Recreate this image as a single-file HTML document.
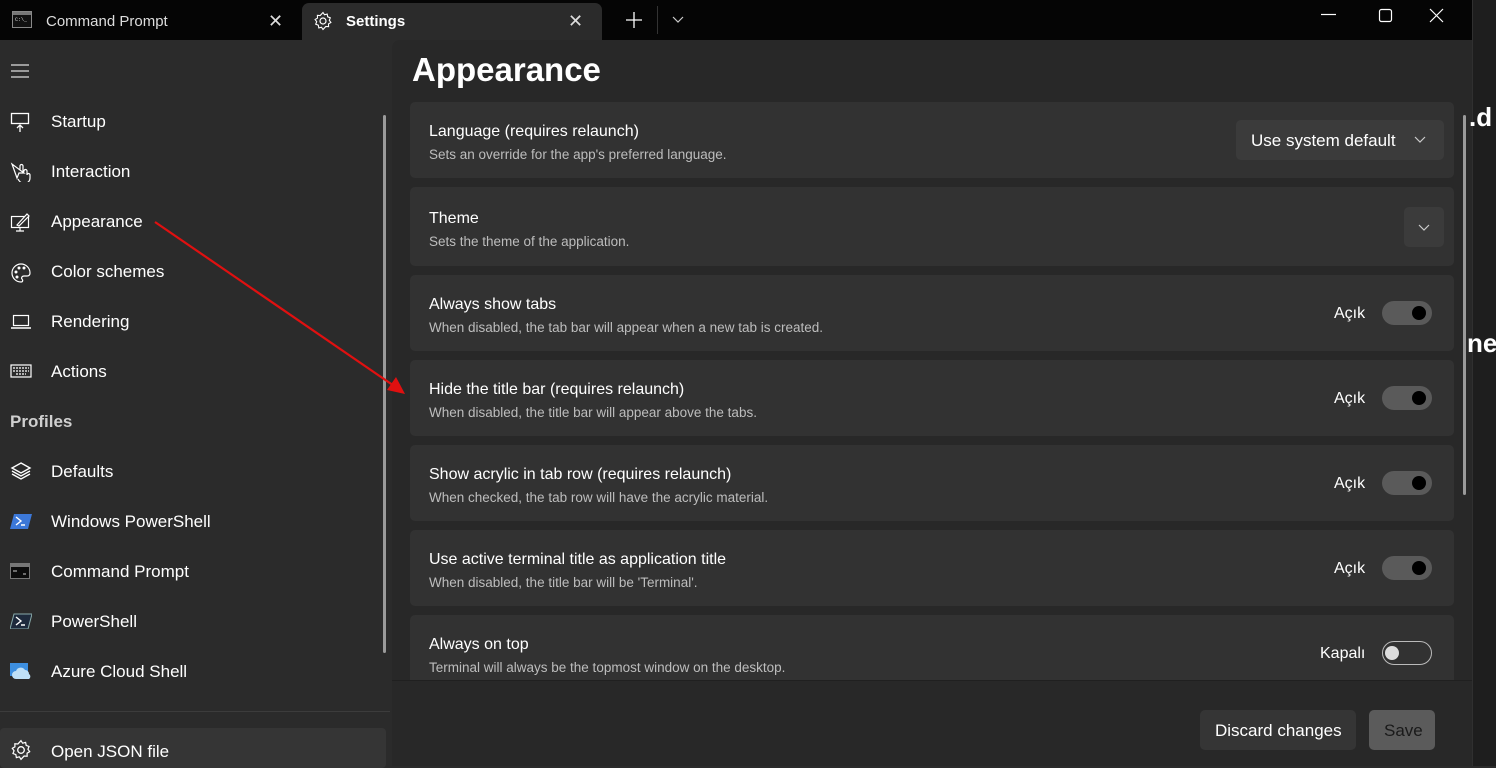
<!DOCTYPE html>
<html><head><meta charset="utf-8"><style>
*{box-sizing:border-box;margin:0;padding:0}
body{width:1496px;height:766px;overflow:hidden;background:#2b2b2b;font-family:"Liberation Sans",sans-serif;color:#fff;position:relative}
.abs{position:absolute}
.tabbar{left:0;top:0;width:1472px;height:40px;background:#050505}
.tab{top:3px;height:37px;font-size:15px;display:flex;align-items:center}
.side{left:0;top:40px;width:390px;height:726px;background:#2b2b2b}
.nav{position:absolute;left:51px;font-size:17px;color:#fff}
.ic{position:absolute;left:10px}
.main{left:392px;top:40px;width:1080px;height:726px;background:#282828;border-top-left-radius:8px}
.card{position:absolute;left:18px;width:1044px;background:#323232;border-radius:5px}
.card .t{position:absolute;left:19px;font-size:16px;color:#fff;top:21px}
.card .s{position:absolute;left:19px;font-size:13.5px;color:#bdbdbd;top:45px}
.tg{position:absolute;right:22px;width:50px;height:24px;border-radius:12px;background:#5a5a5a}
.tg.on::after{content:"";position:absolute;right:6px;top:5px;width:14px;height:14px;border-radius:50%;background:#000}
.tl{position:absolute;font-size:16px;color:#fff}
.right{left:1472px;top:0;width:24px;height:766px;background:#1e1e1e;border-left:1px solid #303030}
</style></head><body>
<div class="abs tabbar"></div>
<div class="abs tab" style="left:0;width:300px;">
 <svg class="abs" style="left:12px;top:8px" width="20" height="17"><rect x="0.5" y="0.5" width="19" height="16" fill="#111" stroke="#888"/><rect x="1" y="1" width="18" height="3" fill="#777"/><text x="3" y="10" font-size="5" fill="#ddd" font-family="Liberation Mono">C:\_</text></svg>
 <span class="abs" style="left:46px;color:#ddd">Command Prompt</span>
 <span class="abs" style="left:268px;color:#ddd;font-size:18px">✕</span>
</div>
<div class="abs tab" style="left:302px;width:300px;background:#2b2b2b;border-radius:7px 7px 0 0;">
 <svg class="abs" style="left:11px;top:8px" width="20" height="20" viewBox="0 0 20 20"><circle cx="10" cy="10" r="3" fill="none" stroke="#fff" stroke-width="1.2"/><path d="M10 1.5l1.5 2.3 2.7-.7.5 2.7 2.6 1-1 2.5 1.6 2.2-2.4 1.4.1 2.8-2.8-.2L10 18.5l-1.5-2.3-2.7.7-.5-2.7-2.6-1 1-2.5L2.1 8.5l2.4-1.4-.1-2.8 2.8.2z" fill="none" stroke="#fff" stroke-width="1.1"/></svg>
 <span class="abs" style="left:44px;font-weight:bold">Settings</span>
 <span class="abs" style="left:266px;color:#ddd;font-size:18px">✕</span>
</div>
<svg class="abs" style="left:625px;top:11px" width="18" height="18"><path d="M9 1v16M1 9h16" stroke="#fff" stroke-width="1.3"/></svg>
<div class="abs" style="left:657px;top:6px;width:1px;height:28px;background:#333"></div>
<svg class="abs" style="left:672px;top:16px" width="12" height="8"><path d="M1 1l5 5 5-5" stroke="#ccc" fill="none" stroke-width="1.2"/></svg>
<svg class="abs" style="left:1320px;top:8px" width="140" height="16"><path d="M1 6.5h15" stroke="#fff" stroke-width="1.2"/><rect x="59.5" y="1.5" width="12" height="12" rx="2" fill="none" stroke="#fff" stroke-width="1.2"/><path d="M110 1l13 13M123 1l-13 13" stroke="#fff" stroke-width="1.2"/></svg>

<div class="abs side">
 <svg class="ic" style="top:24px" width="20" height="14"><path d="M1 1h18M1 7h18M1 13h18" stroke="#ddd" stroke-width="1.2"/></svg>
 <svg class="ic" style="top:72px" width="20" height="20"><rect x="1.5" y="1.5" width="17" height="10" fill="none" stroke="#fff" stroke-width="1.3"/><path d="M10 20v-7M7 16l3-3 3 3" stroke="#fff" fill="none" stroke-width="1.3"/></svg>
 <div class="nav" style="top:72px">Startup</div>
 <svg class="ic" style="top:122px" width="22" height="20"><path d="M2 2l5 14 2-5 5 0z M10 8V4a1.5 1.5 0 013 0v7l1-2a1.5 1.5 0 013 0v2 1 1a1.5 1.5 0 013 0v3c0 3-2 5-5 5h-2c-2 0-4-2-5-4" fill="none" stroke="#fff" stroke-width="1.2"/></svg>
 <div class="nav" style="top:122px">Interaction</div>
 <svg class="ic" style="top:172px" width="22" height="20"><rect x="1.5" y="4.5" width="17" height="11" fill="none" stroke="#fff" stroke-width="1.2"/><path d="M10 19V16M6 19h8M7 13l10-11 2 2-10 10z" stroke="#fff" fill="#2b2b2b" stroke-width="1.2"/></svg>
 <div class="nav" style="top:172px">Appearance</div>
 <svg class="ic" style="top:222px" width="22" height="22"><path d="M11 2a9 9 0 100 18c2 0 2-2 1-3s0-3 2-3h3c2 0 3-1 3-3 0-5-4-9-9-9z" fill="none" stroke="#fff" stroke-width="1.2"/><circle cx="6" cy="10" r="1.5" fill="#fff"/><circle cx="9" cy="6" r="1.5" fill="#fff"/><circle cx="14" cy="6" r="1.5" fill="#fff"/><circle cx="7" cy="15" r="1.5" fill="#fff"/></svg>
 <div class="nav" style="top:222px">Color schemes</div>
 <svg class="ic" style="top:274px" width="22" height="16"><rect x="3.5" y="1.5" width="15" height="10" fill="none" stroke="#fff" stroke-width="1.2"/><path d="M1 14h20" stroke="#fff" stroke-width="1.6"/></svg>
 <div class="nav" style="top:272px">Rendering</div>
 <svg class="ic" style="top:324px" width="22" height="14"><rect x="1" y="1" width="20" height="12" fill="none" stroke="#fff" stroke-width="1.2"/><path d="M3 4h16M3 7h16M6 10h10" stroke="#fff" stroke-width="1.3" stroke-dasharray="2 1"/></svg>
 <div class="nav" style="top:322px">Actions</div>
 <div class="nav" style="left:10px;top:372px;font-weight:bold;color:#cfcfcf">Profiles</div>
 <svg class="ic" style="top:421px" width="22" height="20"><path d="M11 2l9 5-9 5-9-5z M2 10l9 5 9-5 M2 13l9 5 9-5" fill="none" stroke="#fff" stroke-width="1.4"/></svg>
 <div class="nav" style="top:422px">Defaults</div>
 <svg class="ic" style="top:473px" width="22" height="16"><path d="M4 1h18l-4 15H0z" fill="#3c78d8"/><path d="M6 4l5 4-5 4M11 12h4" stroke="#fff" stroke-width="1.4" fill="none"/></svg>
 <div class="nav" style="top:472px">Windows PowerShell</div>
 <svg class="ic" style="top:523px" width="20" height="16"><rect x="0.5" y="0.5" width="19" height="15" fill="#0c0c0c" stroke="#777"/><rect x="1" y="1" width="18" height="3" fill="#777"/><path d="M3 8h4M13 11h3" stroke="#ccc"/></svg>
 <div class="nav" style="top:522px">Command Prompt</div>
 <svg class="ic" style="top:573px" width="22" height="16"><path d="M4 1h18l-4 15H0z" fill="#1e2a3c" stroke="#8aa"/><path d="M6 4l5 4-5 4M11 12h4" stroke="#fff" stroke-width="1.4" fill="none"/></svg>
 <div class="nav" style="top:572px">PowerShell</div>
 <svg class="ic" style="top:622px" width="22" height="18"><rect x="0" y="1" width="18" height="13" fill="#3d8fe0"/><path d="M6 17a4 4 0 010-8 5 5 0 019-1 4 4 0 014 4 3 3 0 010 5z" fill="#bfe0f7"/></svg>
 <div class="nav" style="top:622px">Azure Cloud Shell</div>
 <div class="abs" style="left:0;top:671px;width:390px;height:1px;background:#3c3c3c"></div>
 <div class="abs" style="left:0;top:688px;width:386px;height:40px;background:#353535;border-radius:4px"></div>
 <svg class="ic" style="top:699px" width="22" height="22" viewBox="0 0 20 20"><circle cx="10" cy="10" r="3" fill="none" stroke="#fff" stroke-width="1.2"/><path d="M10 1.5l1.5 2.3 2.7-.7.5 2.7 2.6 1-1 2.5 1.6 2.2-2.4 1.4.1 2.8-2.8-.2L10 18.5l-1.5-2.3-2.7.7-.5-2.7-2.6-1 1-2.5L2.1 8.5l2.4-1.4-.1-2.8 2.8.2z" fill="none" stroke="#fff" stroke-width="1.1"/></svg>
 <div class="nav" style="top:702px">Open JSON file</div>
 <div class="abs" style="left:383px;top:75px;width:3px;height:538px;background:#9a9a9a;border-radius:2px"></div>
</div>

<div class="abs main">
 <div class="abs" style="left:20px;top:11px;font-size:33px;font-weight:bold;">Appearance</div>
 <div class="card" style="top:62px;height:76px"><div class="t">Language (requires relaunch)</div><div class="s">Sets an override for the app's preferred language.</div>
  <div class="abs" style="right:10px;top:18px;width:208px;height:40px;background:#3b3b3b;border-radius:5px;font-size:17px"><span class="abs" style="left:15px;top:11px">Use system default</span><svg class="abs" style="left:178px;top:16px" width="12" height="8"><path d="M1 1l5 5 5-5" stroke="#ccc" fill="none" stroke-width="1.2"/></svg></div></div>
 <div class="card" style="top:147px;height:79px"><div class="t" style="top:23px">Theme</div><div class="s" style="top:47px">Sets the theme of the application.</div>
  <div class="abs" style="right:10px;top:20px;width:40px;height:40px;background:#3b3b3b;border-radius:5px"><svg class="abs" style="left:14px;top:17px" width="12" height="8"><path d="M1 1l5 5 5-5" stroke="#ccc" fill="none" stroke-width="1.2"/></svg></div></div>
 <div class="card" style="top:235px;height:76px"><div class="t">Always show tabs</div><div class="s">When disabled, the tab bar will appear when a new tab is created.</div><div class="tl" style="left:924px;top:30px">Açık</div><div class="tg on" style="top:26px"></div></div>
 <div class="card" style="top:320px;height:76px"><div class="t">Hide the title bar (requires relaunch)</div><div class="s">When disabled, the title bar will appear above the tabs.</div><div class="tl" style="left:924px;top:30px">Açık</div><div class="tg on" style="top:26px"></div></div>
 <div class="card" style="top:405px;height:76px"><div class="t">Show acrylic in tab row (requires relaunch)</div><div class="s">When checked, the tab row will have the acrylic material.</div><div class="tl" style="left:924px;top:30px">Açık</div><div class="tg on" style="top:26px"></div></div>
 <div class="card" style="top:490px;height:76px"><div class="t">Use active terminal title as application title</div><div class="s">When disabled, the title bar will be 'Terminal'.</div><div class="tl" style="left:924px;top:30px">Açık</div><div class="tg on" style="top:26px"></div></div>
 <div class="card" style="top:575px;height:70px;border-radius:5px 5px 0 0"><div class="t">Always on top</div><div class="s">Terminal will always be the topmost window on the desktop.</div><div class="tl" style="left:910px;top:30px">Kapalı</div><div class="tg" style="top:26px;background:transparent;border:1.5px solid #bbb"></div><div class="abs" style="right:55px;top:31px;width:14px;height:14px;border-radius:50%;background:#ddd"></div></div>
 <div class="abs" style="left:0;top:640px;width:1080px;height:86px;background:#282828;border-top:1px solid #202020"></div>
 <div class="abs" style="left:808px;top:670px;width:156px;height:40px;background:#353535;border-radius:5px;font-size:17px"><span class="abs" style="left:15px;top:11px">Discard changes</span></div>
 <div class="abs" style="left:977px;top:670px;width:66px;height:40px;background:#5b5b5b;border-radius:5px;font-size:17px"><span class="abs" style="left:15px;top:11px;color:#1a1a1a">Save</span></div>
 <div class="abs" style="left:1071px;top:75px;width:3px;height:380px;background:#9a9a9a;border-radius:2px"></div>
</div>
<div class="abs right"><span class="abs" style="left:-4px;top:102px;font-size:26px;font-weight:bold;color:#fff">.d</span><span class="abs" style="left:-6px;top:328px;font-size:26px;font-weight:bold;color:#fff">ne</span></div>

<svg class="abs" style="left:0;top:0" width="1496" height="766"><path d="M155 222L400 390" stroke="#e01010" stroke-width="2.2"/><path d="M405 394L387 390L396 377z" fill="#e01010"/></svg>
</body></html>
